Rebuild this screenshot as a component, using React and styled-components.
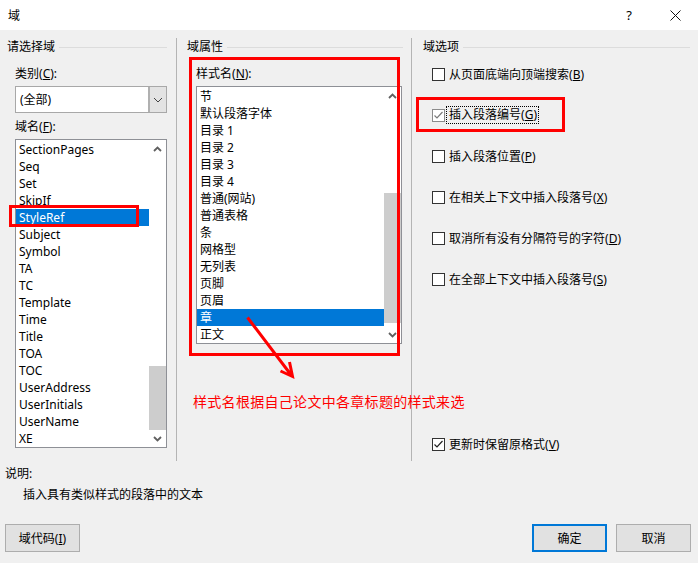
import React from 'react';
import styled, { createGlobalStyle } from 'styled-components';

const GlobalStyle = createGlobalStyle`
  html, body {
    margin: 0;
    padding: 0;
    background: #f0f0f0;
  }
  body {
    font-family: "Noto Sans", "Noto Sans CJK SC", sans-serif;
    font-size: 12px;
    color: #000;
  }
  u {
    text-underline-offset: 1px;
  }
`;

const Window = styled.div`
  position: relative;
  width: 698px;
  height: 563px;
  background: #f0f0f0;
  overflow: hidden;
  display: flex;
  flex-direction: column;
`;

const TitleBar = styled.header`
  height: 30px;
  flex: none;
  background: #fff;
  display: flex;
  align-items: center;
  padding-left: 8px;
`;

const Title = styled.div`
  flex: 1;
  font-size: 12px;
`;

const TitleButton = styled.div`
  width: 46px;
  height: 30px;
  display: flex;
  align-items: center;
  justify-content: center;
  font-size: 13px;
`;

const Columns = styled.div`
  display: flex;
  margin-top: 8px;
  height: 423px;
  flex: none;
`;

const Pane = styled.section`
  display: flex;
  flex-direction: column;
  box-sizing: border-box;
  width: ${(p) => (p.$width ? `${p.$width}px` : 'auto')};
  flex: ${(p) => (p.$width ? 'none' : '1')};
  padding: 0 ${(p) => p.$right}px ${(p) => p.$bottom || 0}px ${(p) => p.$left}px;
  border-right: ${(p) => (p.$divider ? '1px solid #b4b4b4' : 'none')};
`;

const GroupHeading = styled.div`
  display: flex;
  align-items: center;
  gap: 4px;
  height: 18px;
  line-height: 18px;

  &::after {
    content: '';
    flex: 1;
    height: 1px;
    background: #dcdcdc;
  }
`;

const FieldLabel = styled.div`
  height: 18px;
  line-height: 18px;
  margin: ${(p) => p.$top}px 0 0 ${(p) => p.$indent}px;
`;

const Combo = styled.div`
  display: flex;
  box-sizing: border-box;
  width: 152px;
  height: 27px;
  margin: 3px 0 0 8px;
  border: 1px solid #a8a8a8;
  background: #fff;
`;

const ComboValue = styled.div`
  flex: 1;
  padding-left: 4px;
  line-height: 25px;
`;

const ComboButton = styled.div`
  width: 16px;
  background: #e3e3e3;
  border-left: 2px solid #b0b0b0;
  display: flex;
  align-items: center;
  justify-content: center;
`;

const ListBox = styled.div`
  display: flex;
  box-sizing: border-box;
  width: ${(p) => p.$width}px;
  height: ${(p) => p.$height}px;
  margin: 3px 0 0 ${(p) => p.$indent}px;
  border: 1px solid #8e9096;
  background: #fff;
`;

const ListItems = styled.ul`
  flex: 1;
  margin: 0;
  padding: 1px 0 0;
  list-style: none;
  overflow: hidden;
`;

const ListItem = styled.li`
  height: 17px;
  line-height: 17px;
  padding-left: 3px;
  white-space: nowrap;
  background: ${(p) => (p.$selected ? '#0078d7' : 'transparent')};
  color: ${(p) => (p.$selected ? '#fff' : '#000')};
`;

const ScrollBar = styled.div`
  width: 17px;
  flex: none;
  display: flex;
  flex-direction: column;
  background: #fff;
`;

const ScrollArrow = styled.div`
  height: 17px;
  flex: none;
  display: flex;
  align-items: center;
  justify-content: center;
`;

const ScrollTrack = styled.div`
  flex: 1;
`;

const ScrollThumb = styled.div`
  margin-top: ${(p) => p.$offset}px;
  height: ${(p) => p.$size}px;
  background: #cdcdcd;
`;

const OptionList = styled.div`
  display: flex;
  flex-direction: column;
  gap: 23px;
  margin: 9px 0 0 9px;
`;

const Option = styled.label`
  display: flex;
  align-items: center;
  gap: 4px;
  height: 18px;
  margin-top: ${(p) => (p.$pushDown ? 'auto' : '0')};
  margin-left: ${(p) => (p.$pushDown ? '9px' : '0')};
`;

const CheckBox = styled.span`
  width: 13px;
  height: 13px;
  flex: none;
  box-sizing: border-box;
  border: 1px solid ${(p) => (p.$muted ? '#8c8c8c' : '#333')};
  background: #fff;
  display: flex;
  align-items: center;
  justify-content: center;
`;

const FocusText = styled.span`
  margin-left: -2px;
  padding: 0 1px 0 2px;
  line-height: 16px;
  outline: 1px dotted #000;
  outline-offset: 0;
`;

const Description = styled.div`
  margin-top: 4px;
  padding-left: 5px;
`;

const DescLine = styled.div`
  height: 18px;
  line-height: 18px;
  margin: ${(p) => p.$top || 0}px 0 0 ${(p) => p.$indent || 0}px;
`;

const ButtonRow = styled.div`
  margin-top: auto;
  display: flex;
  gap: 9px;
  padding: 0 7px 11px 5px;
`;

const Button = styled.button`
  width: 75px;
  height: 28px;
  padding: 0;
  box-sizing: border-box;
  font: inherit;
  color: #000;
  background: #e1e1e1;
  border: ${(p) => (p.$default ? '2px solid #0078d7' : '1px solid #adadad')};
  margin-right: ${(p) => (p.$apart ? 'auto' : '0')};
`;

const Callout = styled.div`
  position: absolute;
  left: ${(p) => p.$x}px;
  top: ${(p) => p.$y}px;
  width: ${(p) => p.$w}px;
  height: ${(p) => p.$h}px;
  box-sizing: border-box;
  border: 3px solid #ff0000;
  pointer-events: none;
`;

const CalloutNote = styled.div`
  position: absolute;
  left: 193px;
  top: 392px;
  color: #ff0000;
  font-size: 14px;
  letter-spacing: 0.3px;
  line-height: 20px;
  white-space: nowrap;
`;

const CalloutArrow = styled.svg`
  position: absolute;
  left: 0;
  top: 0;
  pointer-events: none;
`;

const fieldNames = [
  'SectionPages', 'Seq', 'Set', 'SkipIf', 'StyleRef', 'Subject', 'Symbol', 'TA', 'TC',
  'Template', 'Time', 'Title', 'TOA', 'TOC', 'UserAddress', 'UserInitials', 'UserName', 'XE',
];

const styleNames = [
  '节', '默认段落字体', '目录 1', '目录 2', '目录 3', '目录 4', '普通(网站)', '普通表格',
  '条', '网格型', '无列表', '页脚', '页眉', '章', '正文',
];

const options = [
  { label: '从页面底端向顶端搜索', key: 'B' },
  { label: '插入段落编号', key: 'G', checked: true, focused: true },
  { label: '插入段落位置', key: 'P' },
  { label: '在相关上下文中插入段落号', key: 'X' },
  { label: '取消所有没有分隔符号的字符', key: 'D' },
  { label: '在全部上下文中插入段落号', key: 'S' },
];

const Chevron = ({ up }) => (
  <svg width="9" height="6" viewBox="0 0 9 6">
    <polyline
      points={up ? '1,5 4.5,1.5 8,5' : '1,1 4.5,4.5 8,1'}
      fill="none"
      stroke="#606060"
      strokeWidth="1.8"
    />
  </svg>
);

const ComboChevron = () => (
  <svg width="10" height="6" viewBox="0 0 10 6">
    <polyline points="1,1 5,5 9,1" fill="none" stroke="#444" strokeWidth="1" />
  </svg>
);

const Check = ({ muted }) => (
  <svg width="11" height="11" viewBox="0 0 11 11">
    <polyline
      points="1.5,5.5 4,8 9.5,2"
      fill="none"
      stroke={muted ? '#7a7a7a' : '#222'}
      strokeWidth="1.2"
    />
  </svg>
);

const Scroll = ({ offset, size }) => (
  <ScrollBar>
    <ScrollArrow><Chevron up /></ScrollArrow>
    <ScrollTrack>
      <ScrollThumb $offset={offset} $size={size} />
    </ScrollTrack>
    <ScrollArrow><Chevron /></ScrollArrow>
  </ScrollBar>
);

const Labelled = ({ text, hotkey }) => (
  <>
    {text}(<u>{hotkey}</u>)
  </>
);

export default function App() {
  return (
    <Window>
      <GlobalStyle />
      <TitleBar>
        <Title>域</Title>
        <TitleButton>?</TitleButton>
        <TitleButton>
          <svg width="11" height="11" viewBox="0 0 11 11">
            <path d="M0.5 0.5 L10.5 10.5 M10.5 0.5 L0.5 10.5" stroke="#111" strokeWidth="1" />
          </svg>
        </TitleButton>
      </TitleBar>

      <Columns>
        <Pane $width={177} $left={7} $right={9} $divider>
          <GroupHeading>请选择域</GroupHeading>
          <FieldLabel $top={9} $indent={8}>
            <Labelled text="类别" hotkey="C" />:
          </FieldLabel>
          <Combo>
            <ComboValue>(全部)</ComboValue>
            <ComboButton><ComboChevron /></ComboButton>
          </Combo>
          <FieldLabel $top={5} $indent={8}>
            <Labelled text="域名" hotkey="F" />:
          </FieldLabel>
          <ListBox $width={152} $height={309} $indent={8}>
            <ListItems>
              {fieldNames.map((name) => (
                <ListItem key={name} $selected={name === 'StyleRef'}>{name}</ListItem>
              ))}
            </ListItems>
            <Scroll offset={209} size={64} />
          </ListBox>
        </Pane>

        <Pane $width={235} $left={10} $right={8} $divider>
          <GroupHeading>域属性</GroupHeading>
          <FieldLabel $top={9} $indent={9}>
            <Labelled text="样式名" hotkey="N" />:
          </FieldLabel>
          <ListBox $width={206} $height={258} $indent={9}>
            <ListItems>
              {styleNames.map((name) => (
                <ListItem key={name} $selected={name === '章'}>{name}</ListItem>
              ))}
            </ListItems>
            <Scroll offset={89} size={130} />
          </ListBox>
        </Pane>

        <Pane $left={11} $right={8} $bottom={8}>
          <GroupHeading>域选项</GroupHeading>
          <OptionList>
            {options.map((opt) => (
              <Option key={opt.key}>
                <CheckBox $muted={opt.focused}>
                  {opt.checked && <Check muted={opt.focused} />}
                </CheckBox>
                {opt.focused ? (
                  <FocusText><Labelled text={opt.label} hotkey={opt.key} /></FocusText>
                ) : (
                  <span><Labelled text={opt.label} hotkey={opt.key} /></span>
                )}
              </Option>
            ))}
          </OptionList>
          <Option $pushDown>
            <CheckBox><Check /></CheckBox>
            <span><Labelled text="更新时保留原格式" hotkey="V" /></span>
          </Option>
        </Pane>
      </Columns>

      <Description>
        <DescLine>说明:</DescLine>
        <DescLine $top={3} $indent={18}>插入具有类似样式的段落中的文本</DescLine>
      </Description>

      <ButtonRow>
        <Button $apart>域代码(<u>I</u>)</Button>
        <Button $default>确定</Button>
        <Button>取消</Button>
      </ButtonRow>

      <Callout $x={9} $y={205} $w={130} $h={22} />
      <Callout $x={189} $y={57} $w={211} $h={299} />
      <Callout $x={416} $y={97} $w={149} $h={35} />
      <CalloutArrow width="698" height="563" viewBox="0 0 698 563">
        <path
          d="M247.5 317.5 L291.5 375.5 M280.5 371 L292.5 376.5 L289.5 362"
          fill="none"
          stroke="#ff0000"
          strokeWidth="3"
          strokeLinejoin="miter"
        />
      </CalloutArrow>
      <CalloutNote>样式名根据自己论文中各章标题的样式来选</CalloutNote>
    </Window>
  );
}
